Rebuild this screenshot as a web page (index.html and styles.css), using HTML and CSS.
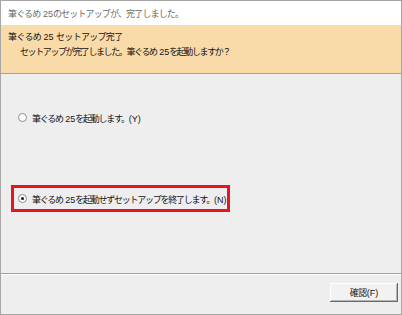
FILE: index.html
```html
<!DOCTYPE html>
<html lang="ja">
<head>
<meta charset="utf-8">
<link rel="stylesheet" href="styles.css">
</head>
<body>
<div class="window">
  <div class="title">筆ぐるめ<span class="en"> 25</span>のセットアップが、完了しました。</div>
  <div class="banner">
    <div class="banner-head">筆ぐるめ<span class="en"> 25 </span>セットアップ完了</div>
    <div class="banner-sub">セットアップが完了しました。筆ぐるめ<span class="en"> 25</span>を起動しますか？</div>
  </div>
  <div class="content">
    <label class="option">
      <span class="radio"></span>
      <span class="option-text">筆ぐるめ<span class="en"> 25</span>を起動します。<span class="en">(Y)</span></span>
    </label>
    <label class="option option-focus">
      <span class="radio radio-on"></span>
      <span class="option-text">筆ぐるめ<span class="en"> 25</span>を起動せずセットアップを終了します。<span class="en">(N)</span></span>
    </label>
  </div>
  <div class="footer">
    <button class="btn">確認<span class="en">(F)</span></button>
  </div>
</div>
</body>
</html>
```
FILE: styles.css
```css
html, body {
  margin: 0;
  padding: 0;
  background: #ffffff;
}
.window {
  width: 402px;
  height: 315px;
  box-sizing: border-box;
  border: 1px solid #a6a6a6;
  display: flex;
  flex-direction: column;
  font-family: "Noto Sans CJK JP", "Noto Sans", sans-serif;
  font-size: 9px;
  letter-spacing: -0.7px;
  color: #141414;
  background: #eeeeee;
}
.en {
  font-family: "Liberation Sans", "DejaVu Sans", sans-serif;
  letter-spacing: 0;
  font-size: 9px;
}
.title {
  height: 24px;
  flex: none;
  background: #ffffff;
  color: #6a6a6a;
  padding-left: 7px;
  display: flex;
  align-items: center;
  padding-top: 1px;
  box-sizing: border-box;
  white-space: pre;
  letter-spacing: -0.85px;
}
.banner {
  height: 49px;
  flex: none;
  box-sizing: border-box;
  background: #f9dba9;
  border-bottom: 1px solid #a3a3a3;
  padding: 4px 0 0 7px;
  display: flex;
  flex-direction: column;
  white-space: pre;
}
.banner-head {
  height: 15px;
  line-height: 15px;
}
.banner-sub {
  height: 15px;
  line-height: 15px;
  padding-left: 12px;
  letter-spacing: -1.4px;
}
.content {
  flex: 1;
  display: flex;
  flex-direction: column;
  align-items: flex-start;
  padding: 30px 0 0 10px;
  gap: 54px;
  border-bottom: 1px solid #a0a0a0;
  box-shadow: 0 1px 0 #ffffff;
}
.option {
  display: flex;
  align-items: center;
  gap: 5px;
  height: 21px;
  box-sizing: content-box;
  border: 3px solid transparent;
  padding: 0 5px 0 4px;
  letter-spacing: -1.25px;
}
.option-focus {
  border-color: #e8141e;
  width: 204px;
}
.radio {
  width: 9px;
  height: 9px;
  border-radius: 50%;
  box-sizing: border-box;
  border: 1px solid #8c8c8c;
  background: #ffffff;
  flex: none;
  display: flex;
  align-items: center;
  justify-content: center;
}
.radio-on::after {
  content: "";
  width: 3px;
  height: 3px;
  border-radius: 50%;
  background: #111111;
}
.option-text {
  white-space: pre;
  padding-top: 1px;
}
.footer {
  height: 40px;
  flex: none;
  display: flex;
  justify-content: flex-end;
  align-items: flex-start;
  padding: 9px 3px 0 0;
  box-sizing: border-box;
}
.btn {
  width: 68px;
  height: 19px;
  font-family: inherit;
  font-size: 9px;
  letter-spacing: -0.5px;
  color: #141414;
  background: #f2f2f2;
  border: none;
  padding: 0;
  box-shadow: inset -1px -1px 0 #6a6a6a, inset 1px 1px 0 #ffffff, inset -2px -2px 0 #b4b4b4;
}
```
